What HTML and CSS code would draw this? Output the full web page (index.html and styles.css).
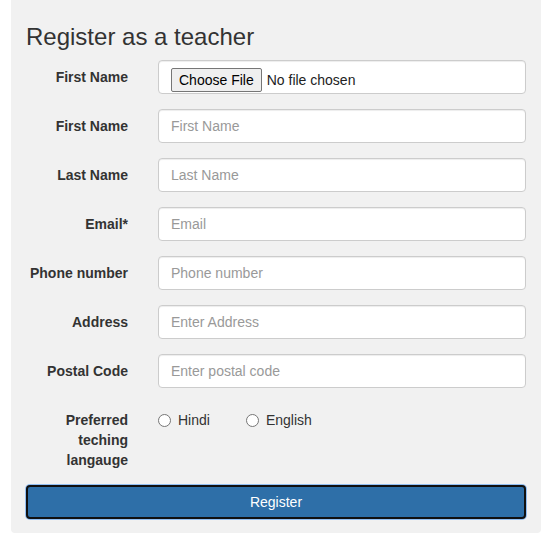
FILE: index.html
```
<!DOCTYPE html>
<html>
<head>
<meta charset="utf-8">
<link rel="stylesheet" href="styles.css">
</head>
<body>
<div class="card">
  <h3 class="title">Register as a teacher</h3>
  <form class="form">
    <div class="group">
      <label class="lbl">First Name</label>
      <div class="ctl">
        <div class="input file"><span class="file-btn">Choose File</span><span class="file-text">No file chosen</span></div>
      </div>
    </div>
    <div class="group">
      <label class="lbl">First Name</label>
      <div class="ctl"><input class="input" type="text" placeholder="First Name"></div>
    </div>
    <div class="group">
      <label class="lbl">Last Name</label>
      <div class="ctl"><input class="input" type="text" placeholder="Last Name"></div>
    </div>
    <div class="group">
      <label class="lbl">Email*</label>
      <div class="ctl"><input class="input" type="text" placeholder="Email"></div>
    </div>
    <div class="group">
      <label class="lbl">Phone number</label>
      <div class="ctl"><input class="input" type="text" placeholder="Phone number"></div>
    </div>
    <div class="group">
      <label class="lbl">Address</label>
      <div class="ctl"><input class="input" type="text" placeholder="Enter Address"></div>
    </div>
    <div class="group">
      <label class="lbl">Postal Code</label>
      <div class="ctl"><input class="input" type="text" placeholder="Enter postal code"></div>
    </div>
    <div class="group">
      <label class="lbl">Preferred teching langauge</label>
      <div class="ctl radios">
        <label class="radio"><span class="circle"></span>Hindi</label>
        <label class="radio"><span class="circle"></span>English</label>
      </div>
    </div>
    <button type="button" class="btn">Register</button>
  </form>
</div>
</body>
</html>
```
FILE: styles.css
```
html, body {
  margin: 0;
  padding: 0;
  background: #fff;
  font-family: "Liberation Sans", Arial, sans-serif;
  font-size: 14px;
  line-height: 20px;
  color: #333;
}
.card {
  margin-left: 11px;
  width: 530px;
  box-sizing: border-box;
  padding: 3.6px 15px 14px;
  background: #f1f1f1;
  border-radius: 0 0 4px 4px;
}
.title {
  margin: 20px 0 10px;
  font-size: 24px;
  font-weight: 500;
  line-height: 26.4px;
  color: #333;
}
.form {
  display: flex;
  flex-direction: column;
}
.group {
  display: grid;
  grid-template-columns: 102px 1fr;
  column-gap: 30px;
  margin-bottom: 15px;
}
.lbl {
  padding-top: 7px;
  text-align: right;
  font-weight: bold;
}
.input {
  display: block;
  width: 100%;
  height: 34px;
  box-sizing: border-box;
  padding: 6px 12px;
  font-family: inherit;
  font-size: 14px;
  line-height: 20px;
  color: #555;
  background: #fff;
  border: 1px solid #ccc;
  border-radius: 4px;
  box-shadow: inset 0 1px 1px rgba(0,0,0,.075);
  outline: none;
}
.input::placeholder {
  color: #999;
}
.file {
  display: flex;
  align-items: flex-start;
  padding-top: 7px;
  padding-bottom: 0;
  color: #333;
}
.file-btn {
  height: 24px;
  box-sizing: border-box;
  padding: 1px 7px;
  margin-right: 5px;
  font-size: 14px;
  line-height: 20px;
  color: #000;
  background: #efefef;
  border: 1px solid #767676;
  border-radius: 2px;
}
.file-text {
  line-height: 24px;
  color: #222;
}
.radios {
  display: flex;
  padding-top: 7px;
  height: 20px;
}
.radio {
  display: flex;
  align-items: center;
  height: 20px;
  color: #333;
  margin-right: 36px;
}
.circle {
  width: 13px;
  height: 13px;
  box-sizing: border-box;
  border: 1px solid #767676;
  border-radius: 50%;
  background: #fff;
  margin-right: 7px;
}
.btn {
  display: block;
  width: 100%;
  height: 34px;
  font-family: inherit;
  font-size: 14px;
  color: #fff;
  background: #2e6fa8;
  border: 2px solid #101010;
  border-radius: 4px;
  box-shadow: 0 0 0 1px #93bff2;
  cursor: pointer;
}
```
